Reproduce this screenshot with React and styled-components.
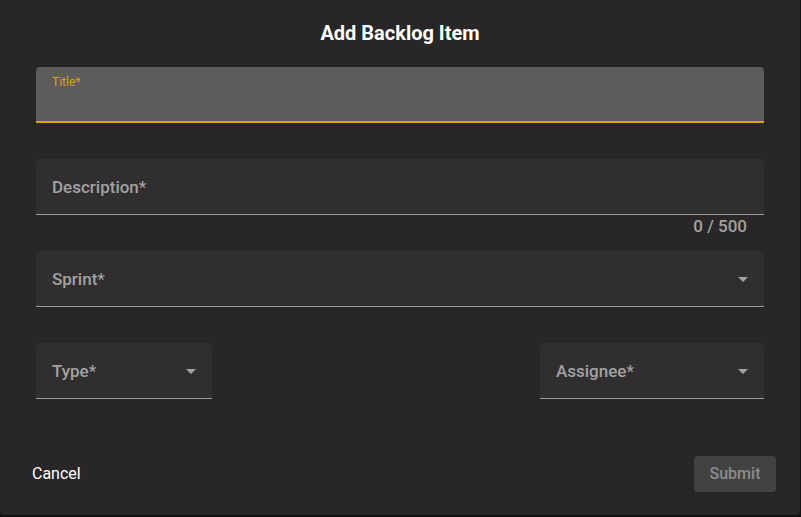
import React from "react";
import styled, { createGlobalStyle } from "styled-components";

const GlobalStyle = createGlobalStyle`
  html, body {
    margin: 0;
    padding: 0;
    background: #141314;
    font-family: Roboto, "Liberation Sans", Arial, sans-serif;
  }
`;

const ArrowDropDown = () => (
  <svg width="24" height="24" viewBox="0 0 24 24" fill="currentColor">
    <path d="M7 10l5 5 5-5z" />
  </svg>
);

const App = () => {
  return (
    <>
      <GlobalStyle />
      <Dialog>
        <Heading>Add Backlog Item</Heading>
        <Form>
          <Field $focused $mt="20px">
            <SmallLabel>Title*</SmallLabel>
          </Field>

          <Field $mt="36px">
            <Label>Description*</Label>
          </Field>
          <Helper>0 / 500</Helper>

          <Field $mt="14px">
            <Label>Sprint*</Label>
            <Arrow>
              <ArrowDropDown />
            </Arrow>
          </Field>

          <SelectRow>
            <Field $width="176px">
              <Label>Type*</Label>
              <Arrow>
                <ArrowDropDown />
              </Arrow>
            </Field>
            <Field $width="224px">
              <Label>Assignee*</Label>
              <Arrow>
                <ArrowDropDown />
              </Arrow>
            </Field>
          </SelectRow>
        </Form>
        <Actions>
          <TextButton>Cancel</TextButton>
          <SubmitButton disabled>Submit</SubmitButton>
        </Actions>
      </Dialog>
    </>
  );
};

export default App;

const Dialog = styled.div`
  width: 800px;
  height: 515px;
  box-sizing: border-box;
  background: #282627;
  border-radius: 0 0 4px 4px;
  display: flex;
  flex-direction: column;
`;

const Heading = styled.h2`
  margin: 19px 0 0;
  height: 28px;
  line-height: 28px;
  text-align: center;
  font-size: 20px;
  font-weight: 700;
  color: #ffffff;
`;

const Form = styled.div`
  padding: 0 36px;
  display: flex;
  flex-direction: column;
`;

const Field = styled.div`
  position: relative;
  flex: none;
  width: ${(p) => p.$width || "100%"};
  height: 56px;
  margin-top: ${(p) => p.$mt || "0"};
  box-sizing: border-box;
  background: ${(p) => (p.$focused ? "#5d5c5d" : "#302e2f")};
  border-radius: 4px 4px 0 0;
  border-bottom: ${(p) => (p.$focused ? "2px solid #e0a500" : "1px solid #9b9a9b")};
  display: flex;
  align-items: ${(p) => (p.$focused ? "flex-start" : "center")};
  padding: 0 16px;
`;

const Label = styled.span`
  margin-top: 1px;
  font-size: 17px;
  font-weight: 500;
  color: #a3a2a3;
`;

const SmallLabel = styled.span`
  margin-top: 8px;
  font-size: 12px;
  line-height: 14px;
  color: #d9a20c;
`;

const Arrow = styled.span`
  position: absolute;
  right: 9px;
  top: 16px;
  width: 24px;
  height: 24px;
  color: #a3a2a3;
  display: flex;
`;

const Helper = styled.span`
  align-self: flex-end;
  margin: 1px 17px 0 0;
  height: 21px;
  line-height: 21px;
  font-size: 17px;
  font-weight: 500;
  color: #a3a2a3;
`;

const SelectRow = styled.div`
  display: flex;
  justify-content: space-between;
  margin-top: 36px;
`;

const Actions = styled.div`
  margin-top: auto;
  padding: 0 24px 23px;
  display: flex;
  justify-content: space-between;
  align-items: center;
`;

const TextButton = styled.button`
  background: none;
  border: none;
  padding: 8px;
  height: 36px;
  margin-bottom: 1px;
  font-family: inherit;
  font-size: 16px;
  font-weight: 400;
  color: #ffffff;
  cursor: pointer;
`;

const SubmitButton = styled.button`
  width: 82px;
  height: 36px;
  background: #434243;
  border: none;
  border-radius: 4px;
  font-family: inherit;
  font-size: 16px;
  font-weight: 500;
  color: #8c8b8c;
`;
